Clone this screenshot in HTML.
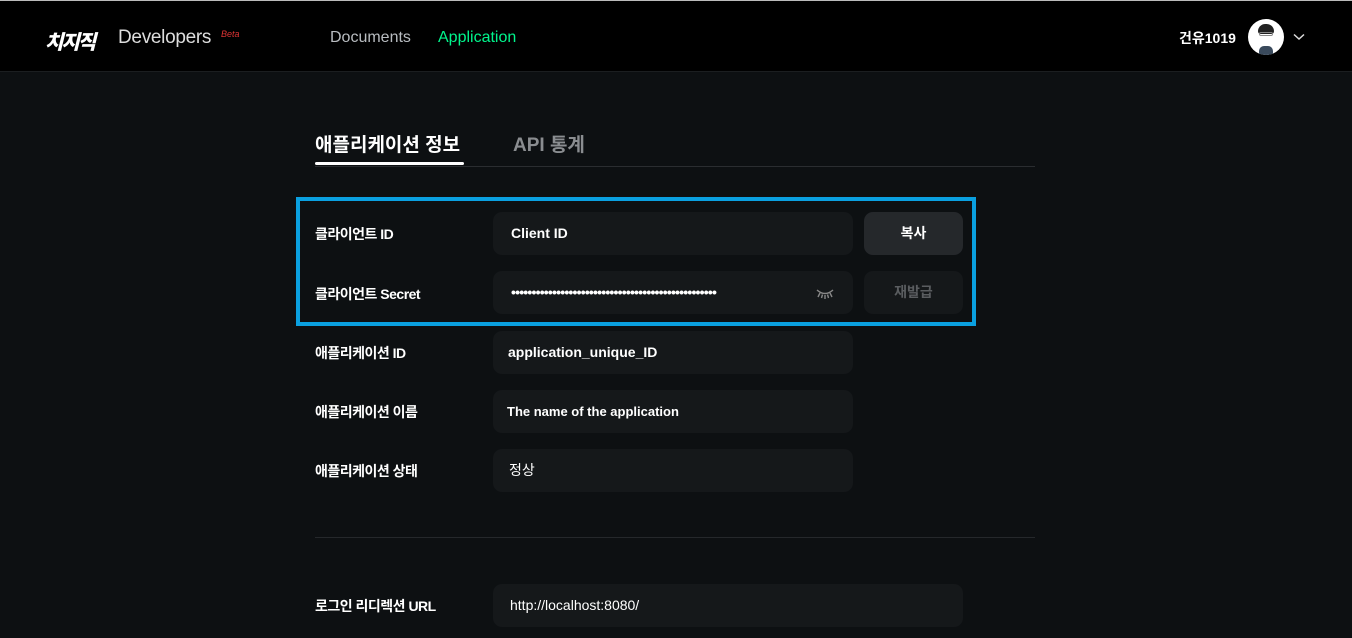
<!DOCTYPE html>
<html><head><meta charset="utf-8"><style>
*{margin:0;padding:0;box-sizing:border-box}
body{width:1352px;height:638px;overflow:hidden;background:#0d1012;font-family:"Liberation Sans","Noto Sans CJK KR",sans-serif;color:#fff;position:relative}
.hdr{position:absolute;left:0;top:0;width:1352px;height:72px;background:#000;border-top:1px solid #bbb;border-bottom:1px solid #1b1e20}
.abs{position:absolute}
.lbl{position:absolute;left:315px;font-size:14px;font-weight:bold;letter-spacing:-0.5px}
.inp{position:absolute;left:493px;width:360px;height:43px;background:#15181a;border-radius:9px;font-size:14px;font-weight:bold;padding-left:16px;line-height:43px}
.btn{position:absolute;left:864px;width:99px;height:43px;border-radius:9px;font-size:14px;font-weight:bold;text-align:center;line-height:43px}
</style></head><body>
<div class="hdr">
 <div class="abs" style="left:45px;top:25px;font-size:20px;font-weight:900;font-style:italic;letter-spacing:-2px">치지직</div>
 <div class="abs" style="left:118px;top:26px;font-size:19px;color:#ddd;letter-spacing:-0.3px">Developers</div>
 <div class="abs" style="left:221px;top:28px;font-size:9px;font-style:italic;color:#d33">Beta</div>
 <div class="abs" style="left:330px;top:28px;font-size:16px;color:#b8bcc0">Documents</div>
 <div class="abs" style="left:438px;top:28px;font-size:16px;color:#00f58c">Application</div>
 <div class="abs" style="left:1179px;top:27px;font-size:14px;font-weight:bold">건유1019</div>
 <div class="abs" style="left:1248px;top:18px;width:36px;height:36px;border-radius:50%;background:#fff;overflow:hidden">
  <div class="abs" style="left:10px;top:5px;width:16px;height:10px;border-radius:8px 8px 3px 3px;background:#222"></div>
  <div class="abs" style="left:11px;top:13px;width:14px;height:4px;border:1px solid #888;border-radius:2px"></div>
  <div class="abs" style="left:11px;top:27px;width:14px;height:10px;border-radius:5px 5px 0 0;background:#3a4a5c"></div>
 </div>
 <svg class="abs" style="left:1293px;top:32px" width="12" height="8" viewBox="0 0 12 8"><path d="M1 1.5L6 6L11 1.5" stroke="#ddd" stroke-width="1.5" fill="none"/></svg>
</div>
<div class="abs" style="left:315px;top:130px;font-size:19px;font-weight:bold">애플리케이션 정보</div>
<div class="abs" style="left:513px;top:130px;font-size:19px;font-weight:bold;color:#8a8d90">API 통계</div>
<div class="abs" style="left:315px;top:166px;width:720px;height:1px;background:#2a2d30"></div>
<div class="abs" style="left:315px;top:162px;width:149px;height:3px;background:#fff;border-radius:2px"></div>
<div class="abs" style="left:296px;top:197px;width:680px;height:129px;border:4px solid #0aa0e0"></div>
<div class="lbl" style="top:224px">클라이언트 ID</div>
<div class="inp" style="top:212px;padding-left:18px">Client ID</div>
<div class="btn" style="top:212px;background:#25282b">복사</div>
<div class="lbl" style="top:284px">클라이언트 Secret</div>
<div class="inp" style="top:271px;letter-spacing:-0.8px;padding-left:18px">••••••••••••••••••••••••••••••••••••••••••••••••••</div>
<svg class="abs" style="left:815px;top:288px" width="20" height="12" viewBox="0 0 20 12"><path d="M2 2Q10 9 18 2M5 5L3 9M10 7V11M15 5L17 9M7.5 6.5L6.5 10M12.5 6.5L13.5 10" stroke="#888" stroke-width="1.4" fill="none"/></svg>
<div class="btn" style="top:271px;background:#15181a;color:#5a5d60">재발급</div>
<div class="lbl" style="top:343px">애플리케이션 ID</div>
<div class="inp" style="top:331px;padding-left:15px">application_unique_ID</div>
<div class="lbl" style="top:402px">애플리케이션 이름</div>
<div class="inp" style="top:390px;padding-left:14px;font-size:13px">The name of the application</div>
<div class="lbl" style="top:461px">애플리케이션 상태</div>
<div class="inp" style="top:449px;font-weight:normal">정상</div>
<div class="abs" style="left:315px;top:537px;width:720px;height:1px;background:#25282b"></div>
<div class="lbl" style="top:596px">로그인 리디렉션 URL</div>
<div class="inp" style="top:584px;width:470px;font-weight:normal;padding-left:17px">http://localhost:8080/</div>
</body></html>
